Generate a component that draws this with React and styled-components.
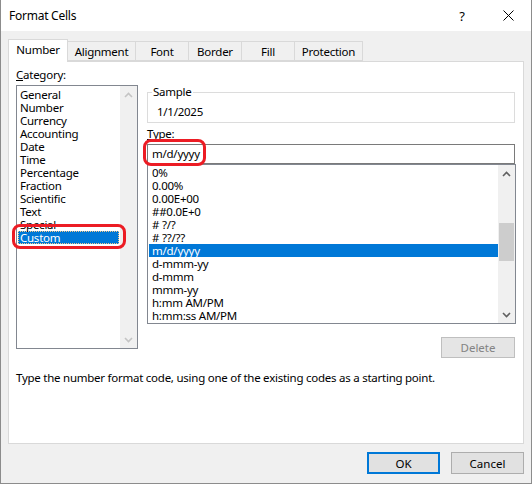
import React from "react";
import styled, { createGlobalStyle } from "styled-components";

const GlobalStyle = createGlobalStyle`
  html, body {
    margin: 0;
    padding: 0;
    background: #ffffff;
  }
  body {
    font-family: "Segoe UI", "Noto Sans", sans-serif;
    font-size: 11.5px;
    letter-spacing: -0.25px;
    color: #000000;
  }
`;

const categories = [
  "General", "Number", "Currency", "Accounting", "Date", "Time",
  "Percentage", "Fraction", "Scientific", "Text", "Special", "Custom",
];

const formats = [
  "0%", "0.00%", "0.00E+00", "##0.0E+0", "# ?/?", "# ??/??", "m/d/yyyy",
  "d-mmm-yy", "d-mmm", "mmm-yy", "h:mm AM/PM", "h:mm:ss AM/PM",
];

const tabs = [
  { label: "Number", width: 60 },
  { label: "Alignment", width: 69 },
  { label: "Font", width: 54 },
  { label: "Border", width: 54 },
  { label: "Fill", width: 54 },
  { label: "Protection", width: 69 },
];

const Chevron = ({ up, color }) => (
  <svg width="9" height="6" viewBox="0 0 9 6">
    <path
      d={up ? "M1 5 L4.5 1.5 L8 5" : "M1 1 L4.5 4.5 L8 1"}
      fill="none"
      stroke={color}
      strokeWidth="1.6"
    />
  </svg>
);

const ScrollBar = ({ disabled, thumbTop, thumbHeight }) => {
  const color = disabled ? "#c4c4c4" : "#606060";
  return (
    <Bar>
      <ArrowBox><Chevron up color={color} /></ArrowBox>
      <Track>
        {!disabled && <Thumb style={{ marginTop: thumbTop, height: thumbHeight }} />}
      </Track>
      <ArrowBox><Chevron color={color} /></ArrowBox>
    </Bar>
  );
};

const App = () => {
  return (
    <>
      <GlobalStyle />
      <Window>
        <TitleBar>
          <Title>Format Cells</Title>
          <HelpButton>?</HelpButton>
          <CloseButton>
            <svg width="11" height="11" viewBox="0 0 11 11">
              <path d="M0.5 0.5 L10.5 10.5 M10.5 0.5 L0.5 10.5" stroke="#000" strokeWidth="1" />
            </svg>
          </CloseButton>
        </TitleBar>

        <Body>
          <TabStrip>
            {tabs.map((t, i) => (
              <Tab key={t.label} $active={i === 0} $width={t.width}>
                {t.label}
              </Tab>
            ))}
          </TabStrip>

          <Panel>
            <LeftColumn>
              <FieldLabel><u>C</u>ategory:</FieldLabel>
              <ListWrap>
                <CategoryList>
                  <Items $padTop={2}>
                    {categories.map((c) => (
                      <CategoryItem key={c} $selected={c === "Custom"}>
                        {c}
                      </CategoryItem>
                    ))}
                  </Items>
                  <ScrollBar disabled />
                </CategoryList>
                <Callout $left={-4} $top={139} $width={114} $height={25} />
              </ListWrap>
            </LeftColumn>

            <RightColumn>
              <GroupBox>
                <Legend>Sample</Legend>
                <SampleValue>1/1/2025</SampleValue>
              </GroupBox>

              <TypeLabel><u>T</u>ype:</TypeLabel>
              <ListWrap>
                <TypeInput>m/d/yyyy</TypeInput>
                <Callout $left={-4} $top={-5} $width={63} $height={27} />
              </ListWrap>
              <FormatList>
                <Items $padTop={1}>
                  {formats.map((f) => (
                    <FormatItem key={f} $selected={f === "m/d/yyyy"}>
                      {f}
                    </FormatItem>
                  ))}
                </Items>
                <ScrollBar thumbTop={41} thumbHeight={38} />
              </FormatList>

              <DeleteButton disabled>Delete</DeleteButton>
            </RightColumn>

            <Description>
              Type the number format code, using one of the existing codes as a starting point.
            </Description>
          </Panel>

          <ButtonRow>
            <DialogButton $default>OK</DialogButton>
            <DialogButton>Cancel</DialogButton>
          </ButtonRow>
        </Body>
      </Window>
    </>
  );
};

const Window = styled.div`
  width: 532px;
  height: 484px;
  box-sizing: border-box;
  background: #f0f0f0;
  border: 1px solid #8c8c8c;
  border-top: none;
  display: flex;
  flex-direction: column;
`;

const TitleBar = styled.div`
  height: 31px;
  background: #ffffff;
  display: flex;
  align-items: center;
  padding-left: 8px;
  font-size: 12px;
`;

const Title = styled.div`
  flex: 1;
`;

const HelpButton = styled.div`
  width: 46px;
  text-align: center;
  font-size: 13px;
`;

const CloseButton = styled.div`
  width: 46px;
  display: flex;
  justify-content: center;
  align-items: center;
`;

const Body = styled.div`
  flex: 1;
  display: flex;
  flex-direction: column;
  padding: 8px 7px 0 7px;
`;

const TabStrip = styled.div`
  display: flex;
  align-items: flex-end;
  height: 22px;
`;

const Tab = styled.div`
  width: ${(p) => p.$width}px;
  height: ${(p) => (p.$active ? 23 : 20)}px;
  box-sizing: border-box;
  border: 1px solid #d9d9d9;
  border-bottom: ${(p) => (p.$active ? "none" : "1px solid #d9d9d9")};
  margin-left: -1px;
  margin-bottom: ${(p) => (p.$active ? "-1px" : "0")};
  background: ${(p) => (p.$active ? "#ffffff" : "#f0f0f0")};
  position: relative;
  z-index: ${(p) => (p.$active ? 2 : 1)};
  display: flex;
  align-items: center;
  justify-content: center;
  padding-bottom: ${(p) => (p.$active ? "3px" : "0")};
  &:first-child {
    margin-left: 0;
  }
`;

const Panel = styled.div`
  height: 383px;
  box-sizing: border-box;
  background: #ffffff;
  border: 1px solid #d9d9d9;
  padding: 6px 6px 0 7px;
  display: grid;
  grid-template-columns: 122px 369px;
  column-gap: 9px;
  align-content: start;
`;

const LeftColumn = styled.div`
  display: flex;
  flex-direction: column;
`;

const RightColumn = styled.div`
  display: flex;
  flex-direction: column;
  padding-top: 17px;
`;

const FieldLabel = styled.div`
  height: 17px;
  line-height: 14px;
  u {
    text-decoration-thickness: 1px;
  }
`;

const ListWrap = styled.div`
  position: relative;
`;

const CategoryList = styled.div`
  height: 264px;
  box-sizing: border-box;
  border: 1px solid #828790;
  display: flex;
`;

const Items = styled.div`
  flex: 1;
  padding-top: ${(p) => p.$padTop}px;
  overflow: hidden;
`;

const CategoryItem = styled.div`
  height: 13px;
  line-height: 13px;
  margin: 0 1px 0 1px;
  padding-left: 2px;
  box-sizing: border-box;
  white-space: nowrap;
  background: ${(p) => (p.$selected ? "#0078d7" : "transparent")};
  color: ${(p) => (p.$selected ? "#ffffff" : "#000000")};
  outline: ${(p) => (p.$selected ? "1px dotted #f3c78a" : "none")};
  outline-offset: -1px;
`;

const Bar = styled.div`
  width: 17px;
  background: #f0f0f0;
  display: flex;
  flex-direction: column;
`;

const ArrowBox = styled.div`
  height: 17px;
  display: flex;
  align-items: center;
  justify-content: center;
`;

const Track = styled.div`
  flex: 1;
  display: flex;
  flex-direction: column;
  align-items: center;
`;

const Thumb = styled.div`
  width: 15px;
  background: #cdcdcd;
`;

const Callout = styled.div`
  position: absolute;
  left: ${(p) => p.$left}px;
  top: ${(p) => p.$top}px;
  width: ${(p) => p.$width}px;
  height: ${(p) => p.$height}px;
  box-sizing: border-box;
  border: 3px solid #ec1c24;
  border-radius: 8px;
  pointer-events: none;
`;

const GroupBox = styled.fieldset`
  margin: 0;
  width: 368px;
  box-sizing: border-box;
  border: 1px solid #dcdcdc;
  padding: 0 0 0 9px;
  height: 38px;
`;

const Legend = styled.legend`
  margin-left: -5px;
  padding: 0 1px;
  line-height: 14px;
`;

const SampleValue = styled.div`
  padding-top: 6px;
  line-height: 13px;
`;

const TypeLabel = styled.div`
  margin-top: 4px;
  height: 17px;
  line-height: 13px;
`;

const TypeInput = styled.div`
  height: 20px;
  width: 368px;
  box-sizing: border-box;
  border: 1px solid #7a7a7a;
  padding-left: 4px;
  line-height: 18px;
`;

const FormatList = styled.div`
  height: 160px;
  width: 369px;
  box-sizing: border-box;
  border: 1px solid #828790;
  display: flex;
`;

const FormatItem = styled.div`
  height: 13px;
  line-height: 13px;
  margin-left: 1px;
  padding-left: 3px;
  white-space: nowrap;
  background: ${(p) => (p.$selected ? "#0078d7" : "transparent")};
  color: ${(p) => (p.$selected ? "#ffffff" : "#000000")};
`;

const DeleteButton = styled.button`
  align-self: flex-end;
  margin: 13px 1px 0 0;
  width: 74px;
  height: 21px;
  font: inherit;
  color: #838383;
  background: #e5e5e5;
  border: 1px solid #bfbfbf;
  padding: 0;
`;

const Description = styled.div`
  grid-column: 1 / -1;
  margin-top: 12px;
  line-height: 15px;
  white-space: nowrap;
`;

const ButtonRow = styled.div`
  display: flex;
  justify-content: flex-end;
  gap: 11px;
  margin-top: 8px;
`;

const DialogButton = styled.button`
  width: 73px;
  height: 22px;
  box-sizing: border-box;
  font: inherit;
  color: #000000;
  background: #e1e1e1;
  border: ${(p) => (p.$default ? "2px solid #0078d7" : "1px solid #adadad")};
  padding: 0;
`;

export default App;
